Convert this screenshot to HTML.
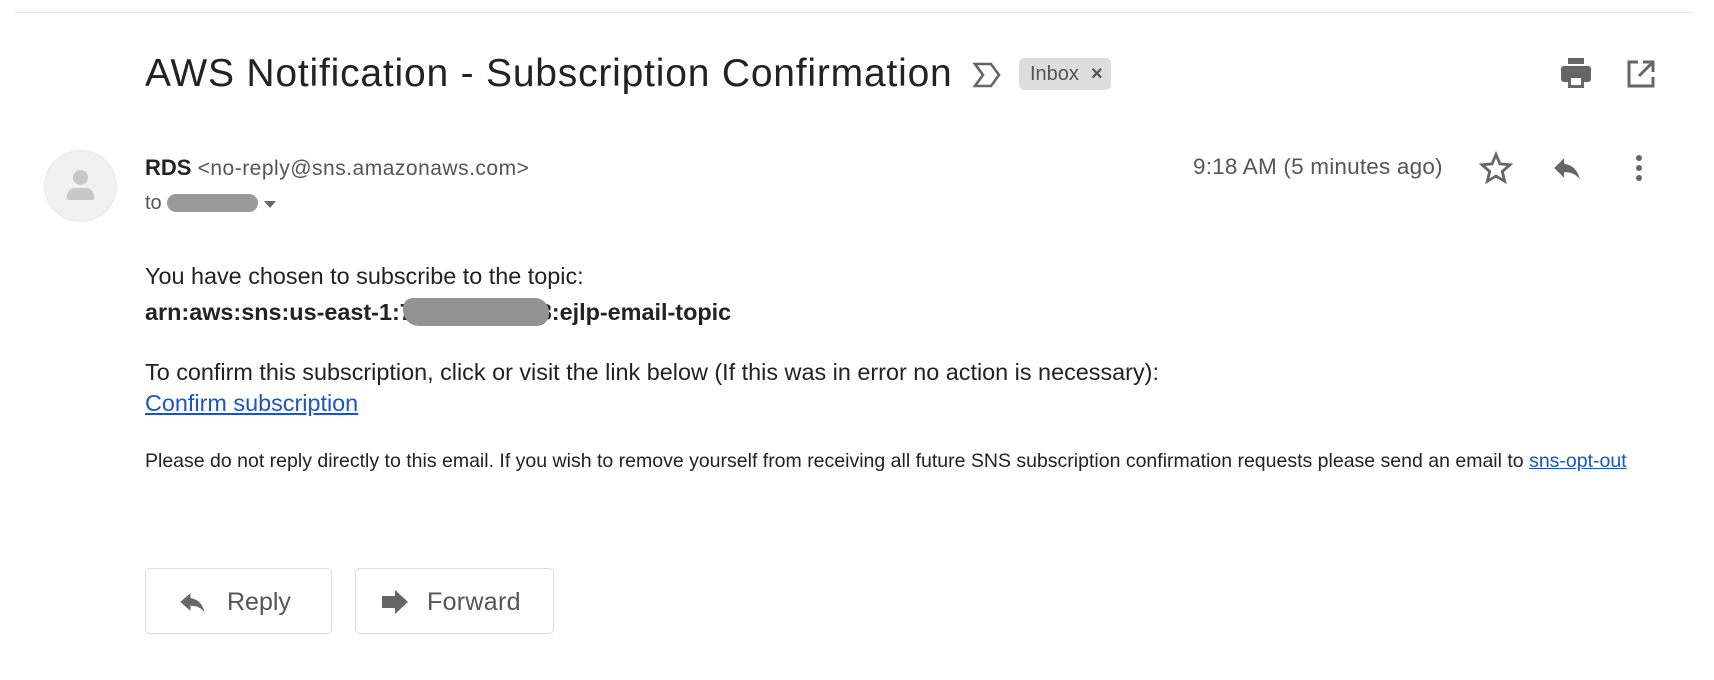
<!DOCTYPE html>
<html><head><meta charset="utf-8"><style>
html,body{margin:0;padding:0;background:#fff;width:1714px;height:680px;overflow:hidden;font-family:"Liberation Sans",Arial,sans-serif;}
.a{position:absolute;white-space:nowrap;}
.t{line-height:1;}
</style></head><body>
<div class="a" style="left:15px;top:12px;width:1677px;height:1px;background:#e6e6e6"></div>
<div class="a t" style="left:145px;top:54px;font-size:39px;color:#222;letter-spacing:0.8px">AWS Notification - Subscription Confirmation</div>
<svg class="a" style="left:972px;top:60px" width="30" height="30" viewBox="0 0 30 30"><path d="M3 4h16l8 11-8 11H3l8-11z" fill="none" stroke="#666" stroke-width="2.6" stroke-linejoin="miter"/></svg>
<div class="a" style="left:1019px;top:58px;width:92px;height:32px;background:#ddd;border-radius:5px"></div>
<div class="a t" style="left:1030px;top:64px;font-size:20px;color:#555">Inbox</div>
<div class="a t" style="left:1091px;top:64px;font-size:20px;color:#555;font-weight:bold">×</div>
<svg class="a" style="left:1559px;top:58px" width="34" height="32" viewBox="0 0 34 32"><rect x="9" y="0" width="16" height="6" fill="#666"/><rect x="2" y="8" width="30" height="16" rx="3" fill="#666"/><rect x="9" y="18" width="16" height="12" fill="#666"/><rect x="12" y="20" width="10" height="7" fill="#fff"/></svg>
<svg class="a" style="left:1626px;top:59px" width="30" height="30" viewBox="0 0 30 30"><path d="M12 3H3v24h24v-9" fill="none" stroke="#666" stroke-width="3"/><path d="M17 3h10v10M27 3L13 17" fill="none" stroke="#666" stroke-width="3"/></svg>
<div class="a" style="left:44px;top:150px;width:73px;height:72px;border-radius:50%;background:#f1f1f1;border:1px solid #e8e8e8;box-sizing:border-box"></div>
<div class="a" style="left:73px;top:170px;width:15px;height:15px;border-radius:50%;background:#c8c8c8"></div>
<div class="a" style="left:67px;top:188px;width:27px;height:12px;border-radius:8px 8px 2px 2px;background:#c8c8c8"></div>
<div class="a t" style="left:145px;top:157px;font-size:22px;color:#222"><b>RDS</b> <span style="font-size:21px;color:#555;letter-spacing:0.5px">&lt;no-reply@sns.amazonaws.com&gt;</span></div>
<div class="a t" style="left:145px;top:193px;font-size:20px;color:#555">to</div>
<div class="a" style="left:167px;top:194px;width:91px;height:18px;border-radius:9px;background:#999"></div>
<div class="a" style="left:264px;top:201px;width:0;height:0;border-left:6px solid transparent;border-right:6px solid transparent;border-top:7px solid #666"></div>
<div class="a t" style="left:1193px;top:156px;font-size:22.5px;color:#555;letter-spacing:0.2px">9:18 AM (5 minutes ago)</div>
<svg class="a" style="left:1479px;top:151px" width="34" height="34" viewBox="0 0 24 24"><path d="M12 2.5l2.8 6.6 7.1.6-5.4 4.7 1.6 7-6.1-3.7-6.1 3.7 1.6-7L2.1 9.7l7.1-.6z" fill="none" stroke="#666" stroke-width="2"/></svg>
<svg class="a" style="left:1550px;top:151px" width="34" height="34" viewBox="0 0 24 24"><path d="M10 9V5l-7 7 7 7v-4.1c5 0 8.5 1.6 11 5.1-1-5-4-10-11-11z" fill="#666"/></svg>
<div class="a" style="left:1636px;top:155px;width:6px;height:6px;border-radius:50%;background:#666"></div>
<div class="a" style="left:1636px;top:165px;width:6px;height:6px;border-radius:50%;background:#666"></div>
<div class="a" style="left:1636px;top:175px;width:6px;height:6px;border-radius:50%;background:#666"></div>
<div class="a t" style="left:145px;top:265px;font-size:23.4px;color:#222">You have chosen to subscribe to the topic:</div>
<div class="a t" style="left:145px;top:301px;font-size:23.4px;color:#222;font-weight:bold">arn:aws:sns:us-east-1:7<span style="display:inline-block;width:126px"></span>8:ejlp-email-topic</div>
<div class="a" style="left:403px;top:298px;width:146px;height:28px;border-radius:10px 14px 12px 16px;background:#939393"></div>
<div class="a t" style="left:145px;top:361px;font-size:23.4px;color:#222">To confirm this subscription, click or visit the link below (If this was in error no action is necessary):</div>
<div class="a t" style="left:145px;top:392px;font-size:23.4px;color:#1a54c8;text-decoration:underline">Confirm subscription</div>
<div class="a t" style="left:145px;top:452px;font-size:19.5px;color:#222">Please do not reply directly to this email. If you wish to remove yourself from receiving all future SNS subscription confirmation requests please send an email to <span style="color:#1a54c8;text-decoration:underline">sns-opt-out</span></div>
<div class="a" style="left:145px;top:568px;width:187px;height:66px;border:1px solid #dadce0;border-radius:5px;box-sizing:border-box"></div>
<svg class="a" style="left:177px;top:588px" width="32" height="28" viewBox="0 0 24 22"><path d="M10 8V4L2 11l8 7v-4.1c5 0 8.5 1.6 11 5.1-1-5-4-10-11-11z" fill="#666"/></svg>
<div class="a t" style="left:227px;top:590px;font-size:25px;color:#555">Reply</div>
<div class="a" style="left:355px;top:568px;width:199px;height:66px;border:1px solid #dadce0;border-radius:5px;box-sizing:border-box"></div>
<svg class="a" style="left:381px;top:589px" width="28" height="26" viewBox="0 0 28 26"><path d="M1 7h13V1l13 12-13 12v-6H1z" fill="#666"/></svg>
<div class="a t" style="left:427px;top:590px;font-size:25px;color:#555;letter-spacing:0.3px">Forward</div>
</body></html>
